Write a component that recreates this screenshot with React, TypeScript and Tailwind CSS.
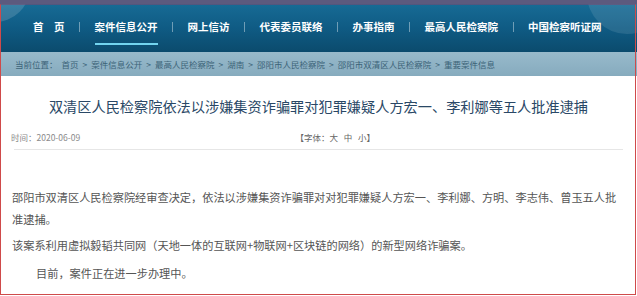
const navItems = ['首\u3000页', '案件信息公开', '网上信访', '代表委员联络', '办事指南', '最高人民检察院', '中国检察听证网'];
const crumbs = ['首页', '案件信息公开', '最高人民检察院', '湖南', '邵阳市人民检察院', '邵阳市双清区人民检察院', '重要案件信息'];

const cjk = { fontFamily: '"Noto Sans CJK SC", "Noto Sans", sans-serif' };

export default function App() {
  return (
    <div className="relative w-[637px] h-[296px] overflow-hidden bg-white" style={cjk}>
      <div className="h-[4px] bg-[#5c5a7e]" />

      {/* main nav */}
      <div className="relative h-[48px] overflow-hidden bg-gradient-to-b from-[#176b95] via-[#0f5b84] to-[#0b4b6d]">
        <div className="absolute -left-[40px] -top-[52px] w-[70px] h-[70px] rounded-full bg-white/15" />
        <div className="absolute -right-[30px] -top-[50px] w-[80px] h-[80px] rounded-full bg-white/10" />
        <div className="relative flex items-start gap-[14.5px] pl-[33px] pt-[16px] text-[10.5px] leading-[14px] font-bold text-white">
          {navItems.map((item, i) => (
            <div key={item} className="flex items-start gap-[14.5px]">
              {i > 0 && <span className="mt-[2px] w-px h-[10px] bg-white/40" />}
              <span className="relative whitespace-nowrap">
                {item}
                {i === 1 && <span className="absolute left-0 right-0 top-[23px] h-[2px] bg-[#72d4ef]" />}
              </span>
            </div>
          ))}
        </div>
      </div>

      {/* breadcrumb */}
      <div className="h-[24px] flex items-center pl-[15px] bg-gradient-to-b from-[#98bacb] to-[#86abbe] text-[8.5px] text-[#3c6378]">
        <span className="mr-[4px]">当前位置：</span>
        {crumbs.map((c, i) => (
          <span key={c} className="flex items-center">
            {i > 0 && <span className="mx-[4px]">&gt;</span>}
            {c}
          </span>
        ))}
      </div>

      {/* article */}
      <div className="pt-[20px] text-center text-[14.2px] leading-[20px] text-[#2a4866] whitespace-nowrap">
        双清区人民检察院依法以涉嫌集资诈骗罪对犯罪嫌疑人方宏一、李利娜等五人批准逮捕
      </div>
      <div className="flex items-center justify-between mt-[15px] pl-[11px] pr-[262px] text-[8.5px] leading-[12px] text-[#8a8a8a]">
        <span>时间：2020-06-09</span>
        <span className="text-[#666]">【字体：大&nbsp;&nbsp;&nbsp;中&nbsp;&nbsp;&nbsp;小】</span>
      </div>
      <div className="mx-[14px] mt-[6px] h-px bg-[#e6e6e6]" />

      <div className="mt-[36px] px-[12px] w-[634px] text-[11.2px] leading-[22px] text-[#555]">
        <p>邵阳市双清区人民检察院经审查决定，依法以涉嫌集资诈骗罪对对犯罪嫌疑人方宏一、李利娜、方明、李志伟、曾玉五人批准逮捕。</p>
        <p className="mt-[4px]">该案系利用虚拟毅韬共同网（天地一体的互联网+物联网+区块链的网络）的新型网络诈骗案。</p>
        <p className="mt-[6px] indent-[24px]">目前，案件正在进一步办理中。</p>
      </div>

      {/* red annotation frame */}
      <div className="absolute left-0 top-[4px] w-[636px] h-[291px] border-[1.5px] border-[#cf4a4a] border-t-[#7a4a70]/60 pointer-events-none" />
    </div>
  );
}
